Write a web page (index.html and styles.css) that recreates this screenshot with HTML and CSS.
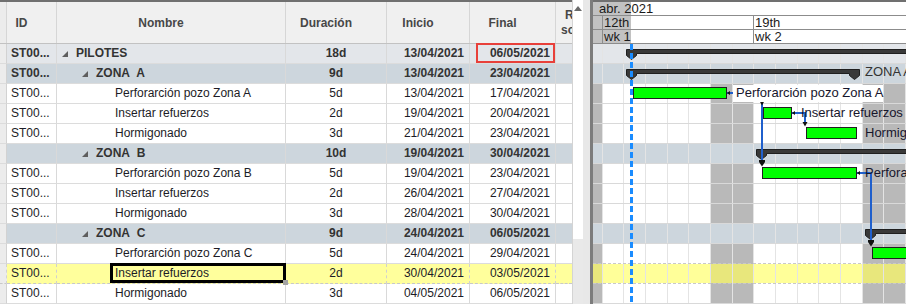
FILE: index.html
```html
<!DOCTYPE html>
<html lang="es">
<head>
    <meta charset="UTF-8">
    <title>Planificación - Pilotes</title>
    <link rel="stylesheet" href="styles.css">
</head>
<body>
    <div class="workspace">
        <div class="grid-pane">
            <div class="grid">
                <div class="grid-head cols">
                    <div class="hcell gutter"></div>
                    <div class="hcell">ID</div>
                    <div class="hcell">Nombre</div>
                    <div class="hcell">Duración</div>
                    <div class="hcell">Inicio</div>
                    <div class="hcell">Final</div>
                    <div class="hcell clip"><span class="l1">Recursos</span><span class="l2">sobreasignados</span></div>
                </div>

                <div class="grid-row cols summary root">
                    <div class="cell gutter"></div>
                    <div class="cell id">ST00...</div>
                    <div class="cell name lvl0"><svg class="caret" width="6" height="6" viewBox="0 0 6 6"><polygon points="6,0 6,6 0,6"/></svg>PILOTES</div>
                    <div class="cell dur">18d</div>
                    <div class="cell date">13/04/2021</div>
                    <div class="cell date mark">06/05/2021</div>
                    <div class="cell extra"></div>
                </div>
                <div class="grid-row cols summary group">
                    <div class="cell gutter"></div>
                    <div class="cell id">ST00...</div>
                    <div class="cell name lvl1"><svg class="caret" width="6" height="6" viewBox="0 0 6 6"><polygon points="6,0 6,6 0,6"/></svg>ZONA&nbsp; A</div>
                    <div class="cell dur">9d</div>
                    <div class="cell date">13/04/2021</div>
                    <div class="cell date">23/04/2021</div>
                    <div class="cell extra"></div>
                </div>
                <div class="grid-row cols">
                    <div class="cell gutter"></div>
                    <div class="cell id">ST00...</div>
                    <div class="cell name lvl2">Perforarción pozo Zona A</div>
                    <div class="cell dur">5d</div>
                    <div class="cell date">13/04/2021</div>
                    <div class="cell date">17/04/2021</div>
                    <div class="cell extra"></div>
                </div>
                <div class="grid-row cols">
                    <div class="cell gutter"></div>
                    <div class="cell id">ST00...</div>
                    <div class="cell name lvl2">Insertar refuerzos</div>
                    <div class="cell dur">2d</div>
                    <div class="cell date">19/04/2021</div>
                    <div class="cell date">20/04/2021</div>
                    <div class="cell extra"></div>
                </div>
                <div class="grid-row cols">
                    <div class="cell gutter"></div>
                    <div class="cell id">ST00...</div>
                    <div class="cell name lvl2">Hormigonado</div>
                    <div class="cell dur">3d</div>
                    <div class="cell date">21/04/2021</div>
                    <div class="cell date">23/04/2021</div>
                    <div class="cell extra"></div>
                </div>
                <div class="grid-row cols summary group">
                    <div class="cell gutter"></div>
                    <div class="cell id"></div>
                    <div class="cell name lvl1"><svg class="caret" width="6" height="6" viewBox="0 0 6 6"><polygon points="6,0 6,6 0,6"/></svg>ZONA&nbsp; B</div>
                    <div class="cell dur">10d</div>
                    <div class="cell date">19/04/2021</div>
                    <div class="cell date">30/04/2021</div>
                    <div class="cell extra"></div>
                </div>
                <div class="grid-row cols">
                    <div class="cell gutter"></div>
                    <div class="cell id">ST00...</div>
                    <div class="cell name lvl2">Perforarción pozo Zona B</div>
                    <div class="cell dur">5d</div>
                    <div class="cell date">19/04/2021</div>
                    <div class="cell date">23/04/2021</div>
                    <div class="cell extra"></div>
                </div>
                <div class="grid-row cols">
                    <div class="cell gutter"></div>
                    <div class="cell id">ST00...</div>
                    <div class="cell name lvl2">Insertar refuerzos</div>
                    <div class="cell dur">2d</div>
                    <div class="cell date">26/04/2021</div>
                    <div class="cell date">27/04/2021</div>
                    <div class="cell extra"></div>
                </div>
                <div class="grid-row cols">
                    <div class="cell gutter"></div>
                    <div class="cell id">ST00...</div>
                    <div class="cell name lvl2">Hormigonado</div>
                    <div class="cell dur">3d</div>
                    <div class="cell date">28/04/2021</div>
                    <div class="cell date">30/04/2021</div>
                    <div class="cell extra"></div>
                </div>
                <div class="grid-row cols summary group">
                    <div class="cell gutter"></div>
                    <div class="cell id"></div>
                    <div class="cell name lvl1"><svg class="caret" width="6" height="6" viewBox="0 0 6 6"><polygon points="6,0 6,6 0,6"/></svg>ZONA&nbsp; C</div>
                    <div class="cell dur">9d</div>
                    <div class="cell date">24/04/2021</div>
                    <div class="cell date">06/05/2021</div>
                    <div class="cell extra"></div>
                </div>
                <div class="grid-row cols">
                    <div class="cell gutter"></div>
                    <div class="cell id">ST00...</div>
                    <div class="cell name lvl2">Perforarción pozo Zona C</div>
                    <div class="cell dur">5d</div>
                    <div class="cell date">24/04/2021</div>
                    <div class="cell date">29/04/2021</div>
                    <div class="cell extra"></div>
                </div>
                <div class="grid-row cols selected">
                    <div class="cell gutter"></div>
                    <div class="cell id">ST00...</div>
                    <div class="cell name lvl2 editing">Insertar refuerzos</div>
                    <div class="cell dur">2d</div>
                    <div class="cell date">30/04/2021</div>
                    <div class="cell date">03/05/2021</div>
                    <div class="cell extra"></div>
                </div>
                <div class="grid-row cols">
                    <div class="cell gutter"></div>
                    <div class="cell id">ST00...</div>
                    <div class="cell name lvl2">Hormigonado</div>
                    <div class="cell dur">3d</div>
                    <div class="cell date">04/05/2021</div>
                    <div class="cell date">06/05/2021</div>
                    <div class="cell extra"></div>
                </div>
            </div>
            <div class="vscroll">
                <div class="vscroll-btn"></div>
                <div class="vscroll-thumb"></div>
            </div>
        </div>

        <div class="splitter"></div>

        <div class="gantt-pane">
            <div class="timescale">
                <div class="scale-row"><div class="scale-month">abr. 2021</div></div>
                <div class="scale-row"><div class="scale-lead"></div><div class="scale-week">12th</div><div class="scale-week">19th</div></div>
                <div class="scale-row"><div class="scale-lead"></div><div class="scale-week">wk 1</div><div class="scale-week">wk 2</div></div>
            </div>

            <!-- chart body, drawn in page coordinates -->
            <svg class="chart" width="313" height="260" viewBox="593 44 313 260">
                <rect class="bg" x="593" y="44" width="313" height="260"/>
                <g class="weekend">
                    <rect x="593" y="44" width="9" height="260"/>
                    <rect x="711" y="44" width="42" height="260"/>
                    <rect x="863" y="44" width="42" height="260"/>
                </g>
                <rect class="row-root" x="593" y="44" width="313" height="19"/>
                <rect class="row-group" x="593" y="64" width="313" height="19"/>
                <rect class="row-group" x="593" y="144" width="313" height="19"/>
                <rect class="row-group" x="593" y="224" width="313" height="19"/>
                <rect class="row-sel" x="593" y="264" width="313" height="19"/>
                <g class="sel-weekend">
                    <rect x="593" y="264" width="9" height="19"/>
                    <rect x="711" y="264" width="42" height="19"/>
                    <rect x="863" y="264" width="42" height="19"/>
                </g>
                <path class="day-lines" d="M602.5,44V304 M623.5,44V304 M645.5,44V304 M667.5,44V304 M688.5,44V304 M710.5,44V304 M732.5,44V304 M753.5,44V304 M775.5,44V304 M797.5,44V304 M818.5,44V304 M840.5,44V304 M862.5,44V304 M883.5,44V304 M905.5,44V304"/>
                <path class="row-lines" d="M593,63.5H906 M593,83.5H906 M593,103.5H906 M593,123.5H906 M593,143.5H906 M593,163.5H906 M593,183.5H906 M593,203.5H906 M593,223.5H906 M593,243.5H906 M593,303.5H906"/>
                <path class="sel-lines" d="M593,263.5H906 M593,283.5H906"/>

                <!-- summary bars -->
                <path class="summary" d="M626.5,49.5 H912 V53.5 H636.5 V55.5 L631.5,59.5 L626.5,55.5 Z"/>
                <path class="summary" d="M626.5,69.5 H859.5 V75.5 L854.5,79.5 L849.5,75.5 V73.5 H636.5 V75.5 L631.5,79.5 L626.5,75.5 Z"/>
                <path class="summary" d="M756.5,149.5 H912 V153.5 H766.5 V155.5 L761.5,159.5 L756.5,155.5 Z"/>
                <path class="summary" d="M865.5,229.5 H912 V233.5 H875.5 V235.5 L870.5,239.5 L865.5,235.5 Z"/>

                <!-- tasks -->
                <rect class="task" x="633.5" y="87.5" width="93" height="11"/>
                <rect class="task" x="763.5" y="107.5" width="28" height="11"/>
                <rect class="task" x="806.5" y="127.5" width="50" height="11"/>
                <rect class="task" x="762.5" y="167.5" width="94" height="11"/>
                <rect class="task" x="872.5" y="247.5" width="40" height="11"/>

                <!-- dependencies -->
                <path class="link" d="M727,93 H762 V162"/>
                <path class="link" d="M792,113 H805 V123"/>
                <path class="link" d="M857,173 H871 V242"/>
                <polygon class="arrow" points="730,91 730,95 727,93"/>
                <polygon class="arrow" points="795,111 795,115 792,113"/>
                <polygon class="arrow" points="860,171 860,175 857,173"/>
                <polygon class="arrow" points="759.5,101 764.5,101 762,105.5"/>
                <polygon class="arrow" points="759,160 765,160 765,162 762,166.5 759,162"/>
                <polygon class="arrow" points="802.5,122 807.5,122 805,126.5"/>
                <polygon class="arrow" points="868,240 874,240 874,242 871,246.5 868,242"/>

                <!-- labels -->
                <text class="label group-label" x="865" y="76">ZONA A</text>
                <rect class="label-bg" x="733" y="85" width="150" height="17"/>
                <text class="label" x="736" y="97">Perforarción pozo Zona A</text>
                <text class="label" x="801" y="117">Insertar refuerzos</text>
                <text class="label" x="865" y="137">Hormigonado</text>
                <text class="label" x="865" y="177">Perforarción pozo Zona B</text>

                <line class="today" x1="631.5" y1="44" x2="631.5" y2="304"/>
            </svg>
        </div>
    </div>
</body>
</html>
```

FILE: styles.css
```css
/* Base */
body {
    margin: 0;
    font-family: 'Liberation Sans', Arial, sans-serif;
    font-size: 12px;
    color: #1c1c26;
    background: #fff;
}

.workspace {
    display: flex;
    width: 906px;
    height: 304px;
    overflow: hidden;
}

/* Task grid (left) */
.grid-pane {
    display: flex;
    flex: none;
    width: 583px;
}

.grid {
    width: 572px;
    flex: none;
}

.cols {
    display: grid;
    grid-template-columns: 7px 50px 229px 101px 83px 86px 16px;
}

.grid-head {
    height: 44px;
    box-sizing: border-box;
    border-top: 2px solid #707070;
    border-bottom: 1px solid #c2c2c2;
    background: #f0f0f0;
}

.hcell {
    border-right: 1px solid #d6d6d6;
    display: flex;
    align-items: center;
    justify-content: center;
    padding-right: 20px;
    font-weight: bold;
    color: #474747;
    white-space: nowrap;
}

.hcell.gutter {
    padding: 0;
    background: #ececec;
}

.hcell.clip {
    display: block;
    padding: 6px 0 0;
    border-right: none;
    overflow: hidden;
    line-height: 15px;
}
.hcell.clip span { display: block; }
.hcell.clip .l1 { padding-left: 9px; }
.hcell.clip .l2 { padding-left: 5px; }

.grid-row {
    height: 20px;
}

.cell {
    border-right: 1px solid #d9d9d9;
    border-bottom: 1px solid #dcdcdc;
    line-height: 19px;
    white-space: nowrap;
    overflow: hidden;
    background: #fff;
}

.grid-row .cell.gutter {
    background: #ececec;
    border-right-color: #d2d2d2;
}

.grid-row .cell.extra {
    border-right: none;
}

.id {
    padding-left: 4px;
}

.name {
    display: flex;
    align-items: center;
}
.lvl0 { padding-left: 5px; }
.lvl1 { padding-left: 25px; }
.lvl2 { padding-left: 58px; }

.caret {
    flex: none;
    margin: 1px 8px 0 0;
    fill: #5e5e5e;
}

.dur {
    text-align: center;
}

.date {
    text-align: right;
    padding-right: 5px;
}

.summary {
    font-weight: bold;
    color: #333;
}
.root .cell { background: #e3e6ea; }
.group .cell { background: #cdd6dd; }

.selected .cell {
    background: #ffff9c;
    border-bottom: 1px dashed #c8c8c8;
    border-right: 1px dashed #d0d0d0;
}

/* red highlight around the project end date */
.mark {
    position: relative;
    overflow: visible;
}
.mark::after {
    content: '';
    position: absolute;
    left: 6px;
    right: 0;
    top: -1px;
    bottom: 0;
    border: 2px solid #e8403a;
}

/* cell being edited */
.editing {
    position: relative;
    overflow: visible;
    z-index: 2;
}
.editing::after {
    content: '';
    position: absolute;
    left: 53px;
    right: -1px;
    top: -1px;
    bottom: 0;
    border: 3px solid #000;
}
.editing::before {
    content: '';
    position: absolute;
    right: -3px;
    bottom: -2px;
    width: 5px;
    height: 5px;
    background: #a3a3a3;
    z-index: 1;
}

/* Vertical scrollbar */
.vscroll {
    width: 11px;
    flex: none;
    border-left: 1px solid #d4d4d4;
    box-sizing: border-box;
    background: #e9e9e9;
    display: flex;
    flex-direction: column;
}
.vscroll-btn {
    height: 17px;
    background: #fff;
    position: relative;
}
.vscroll-btn::after {
    content: '';
    position: absolute;
    left: 1px;
    top: 6px;
    border-left: 4px solid transparent;
    border-right: 4px solid transparent;
    border-bottom: 5px solid #6a6a6a;
}
.vscroll-thumb {
    height: 222px;
    background: #fff;
}

.splitter {
    flex: none;
    width: 10px;
    box-sizing: border-box;
    background: #e8e8e8;
    border-right: 3px solid #7c7c7c;
}

/* Gantt (right) */
.gantt-pane {
    flex: none;
    width: 313px;
    overflow: hidden;
}

.timescale {
    border-top: 2px solid #707070;
    background: linear-gradient(to right, #c2c2c2 38px, #fff 38px);
    font-size: 13px;
    color: #1a1a1a;
}

.scale-row {
    display: flex;
    height: 14px;
    box-sizing: border-box;
    border-bottom: 1px solid #8c8c8c;
    line-height: 13px;
    white-space: nowrap;
}

.scale-month {
    padding-left: 6px;
}

.scale-lead {
    flex: none;
    width: 9px;
}

.scale-week {
    flex: none;
    width: 151px;
    box-sizing: border-box;
    border-left: 1px solid #8c8c8c;
    padding-left: 1px;
}

.chart {
    display: block;
}
.chart .bg { fill: #fff; }
.chart .weekend { fill: #b9b9b9; }
.chart .row-root { fill: #e3e6ea; }
.chart .row-group { fill: #cdd6dd; }
.chart .row-sel { fill: #ffff99; }
.chart .sel-weekend { fill: #e8e77c; }
.chart .day-lines { fill: none; stroke: #e4e4e4; }
.chart .row-lines { fill: none; stroke: #d9d9d9; }
.chart .sel-lines { fill: none; stroke: #c9c9c9; stroke-dasharray: 3 2; }
.chart .summary { fill: #393939; stroke: #1f1f1f; }
.chart .task { fill: #00ff00; stroke: #1f1f1f; }
.chart .link { fill: none; stroke: #1f5fcc; stroke-width: 2; }
.chart .arrow { fill: #111; }
.chart .today { stroke: #1a8cff; stroke-width: 3; stroke-dasharray: 6 3; }
.chart .label {
    font-family: 'Liberation Sans', Arial, sans-serif;
    font-size: 13px;
    fill: #16162c;
}
.chart .group-label { fill: #333; }
.chart .label-bg { fill: #fff; }
```
